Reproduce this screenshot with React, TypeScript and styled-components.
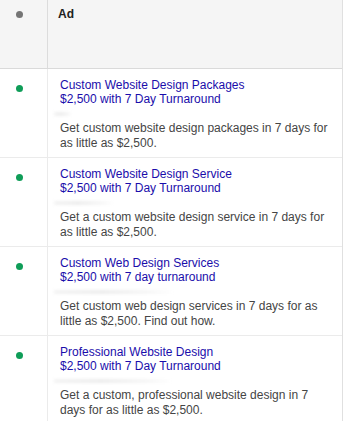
import React from "react";
import styled, { createGlobalStyle } from "styled-components";

const Global = createGlobalStyle`
  html, body { margin: 0; padding: 0; background: #ffffff; }
  body { font-family: "Liberation Sans", Arial, sans-serif; }
`;

const Table = styled.div`
  width: 343px;
  box-sizing: border-box;
  border-right: 1px solid #e0e0e0;
  background: #fff;
`;

const HeaderRow = styled.div`
  display: grid;
  grid-template-columns: 48px 1fr;
  height: 69px;
  box-sizing: border-box;
  background: #f5f5f5;
  border-bottom: 1px solid #dadada;
`;

const HeaderDotCell = styled.div`
  border-right: 1px solid #dcdcdc;
  padding: 11px 0 0 16px;
`;

const HeaderLabel = styled.div`
  padding: 7px 0 0 10px;
  font-size: 12px;
  line-height: 14px;
  font-weight: bold;
  color: #212121;
`;

const Row = styled.div`
  display: grid;
  grid-template-columns: 48px 1fr;
  border-bottom: 1px solid #ebebeb;
`;

const DotCell = styled.div`
  border-right: 1px solid #ebebeb;
  padding: 16px 0 0 16px;
`;

const Dot = styled.span<{ $color: string }>`
  display: block;
  width: 7px;
  height: 7px;
  border-radius: 50%;
  background: ${(p) => p.$color};
`;

const AdCell = styled.div`
  padding: 9px 12px 6px 12px;
  font-size: 12px;
`;

const Title = styled.div`
  color: #1a0dab;
  line-height: 14px;
`;

const UrlBlur = styled.div<{ $w: number }>`
  height: 15px;
  display: flex;
  align-items: center;
  margin-left: -6px;
  &::before {
    content: "";
    display: block;
    width: ${(p) => p.$w}px;
    height: 4px;
    background: linear-gradient(to right, #f3f3f3, #ededed 40%, #f7f7f7 80%, #ffffff);
    filter: blur(1.5px);
  }
`;

const Desc = styled.div`
  color: #454545;
  line-height: 15px;
`;

const ads = [
  {
    t1: "Custom Website Design Packages",
    t2: "$2,500 with 7 Day Turnaround",
    d: "Get custom website design packages in 7 days for as little as $2,500.",
    w: 18,
  },
  {
    t1: "Custom Website Design Service",
    t2: "$2,500 with 7 Day Turnaround",
    d: "Get a custom website design service in 7 days for as little as $2,500.",
    w: 60,
  },
  {
    t1: "Custom Web Design Services",
    t2: "$2,500 with 7 day turnaround",
    d: "Get custom web design services in 7 days for as little as $2,500. Find out how.",
    w: 120,
  },
  {
    t1: "Professional Website Design",
    t2: "$2,500 with 7 Day Turnaround",
    d: "Get a custom, professional website design in 7 days for as little as $2,500.",
    w: 118,
  },
];

export default function App() {
  return (
    <>
      <Global />
      <Table>
        <HeaderRow>
          <HeaderDotCell>
            <Dot $color="#757575" />
          </HeaderDotCell>
          <HeaderLabel>Ad</HeaderLabel>
        </HeaderRow>
        {ads.map((a, i) => (
          <Row key={i}>
            <DotCell>
              <Dot $color="#0f9d58" />
            </DotCell>
            <AdCell>
              <Title>{a.t1}</Title>
              <Title>{a.t2}</Title>
              <UrlBlur $w={a.w} />
              <Desc>{a.d}</Desc>
            </AdCell>
          </Row>
        ))}
      </Table>
    </>
  );
}
